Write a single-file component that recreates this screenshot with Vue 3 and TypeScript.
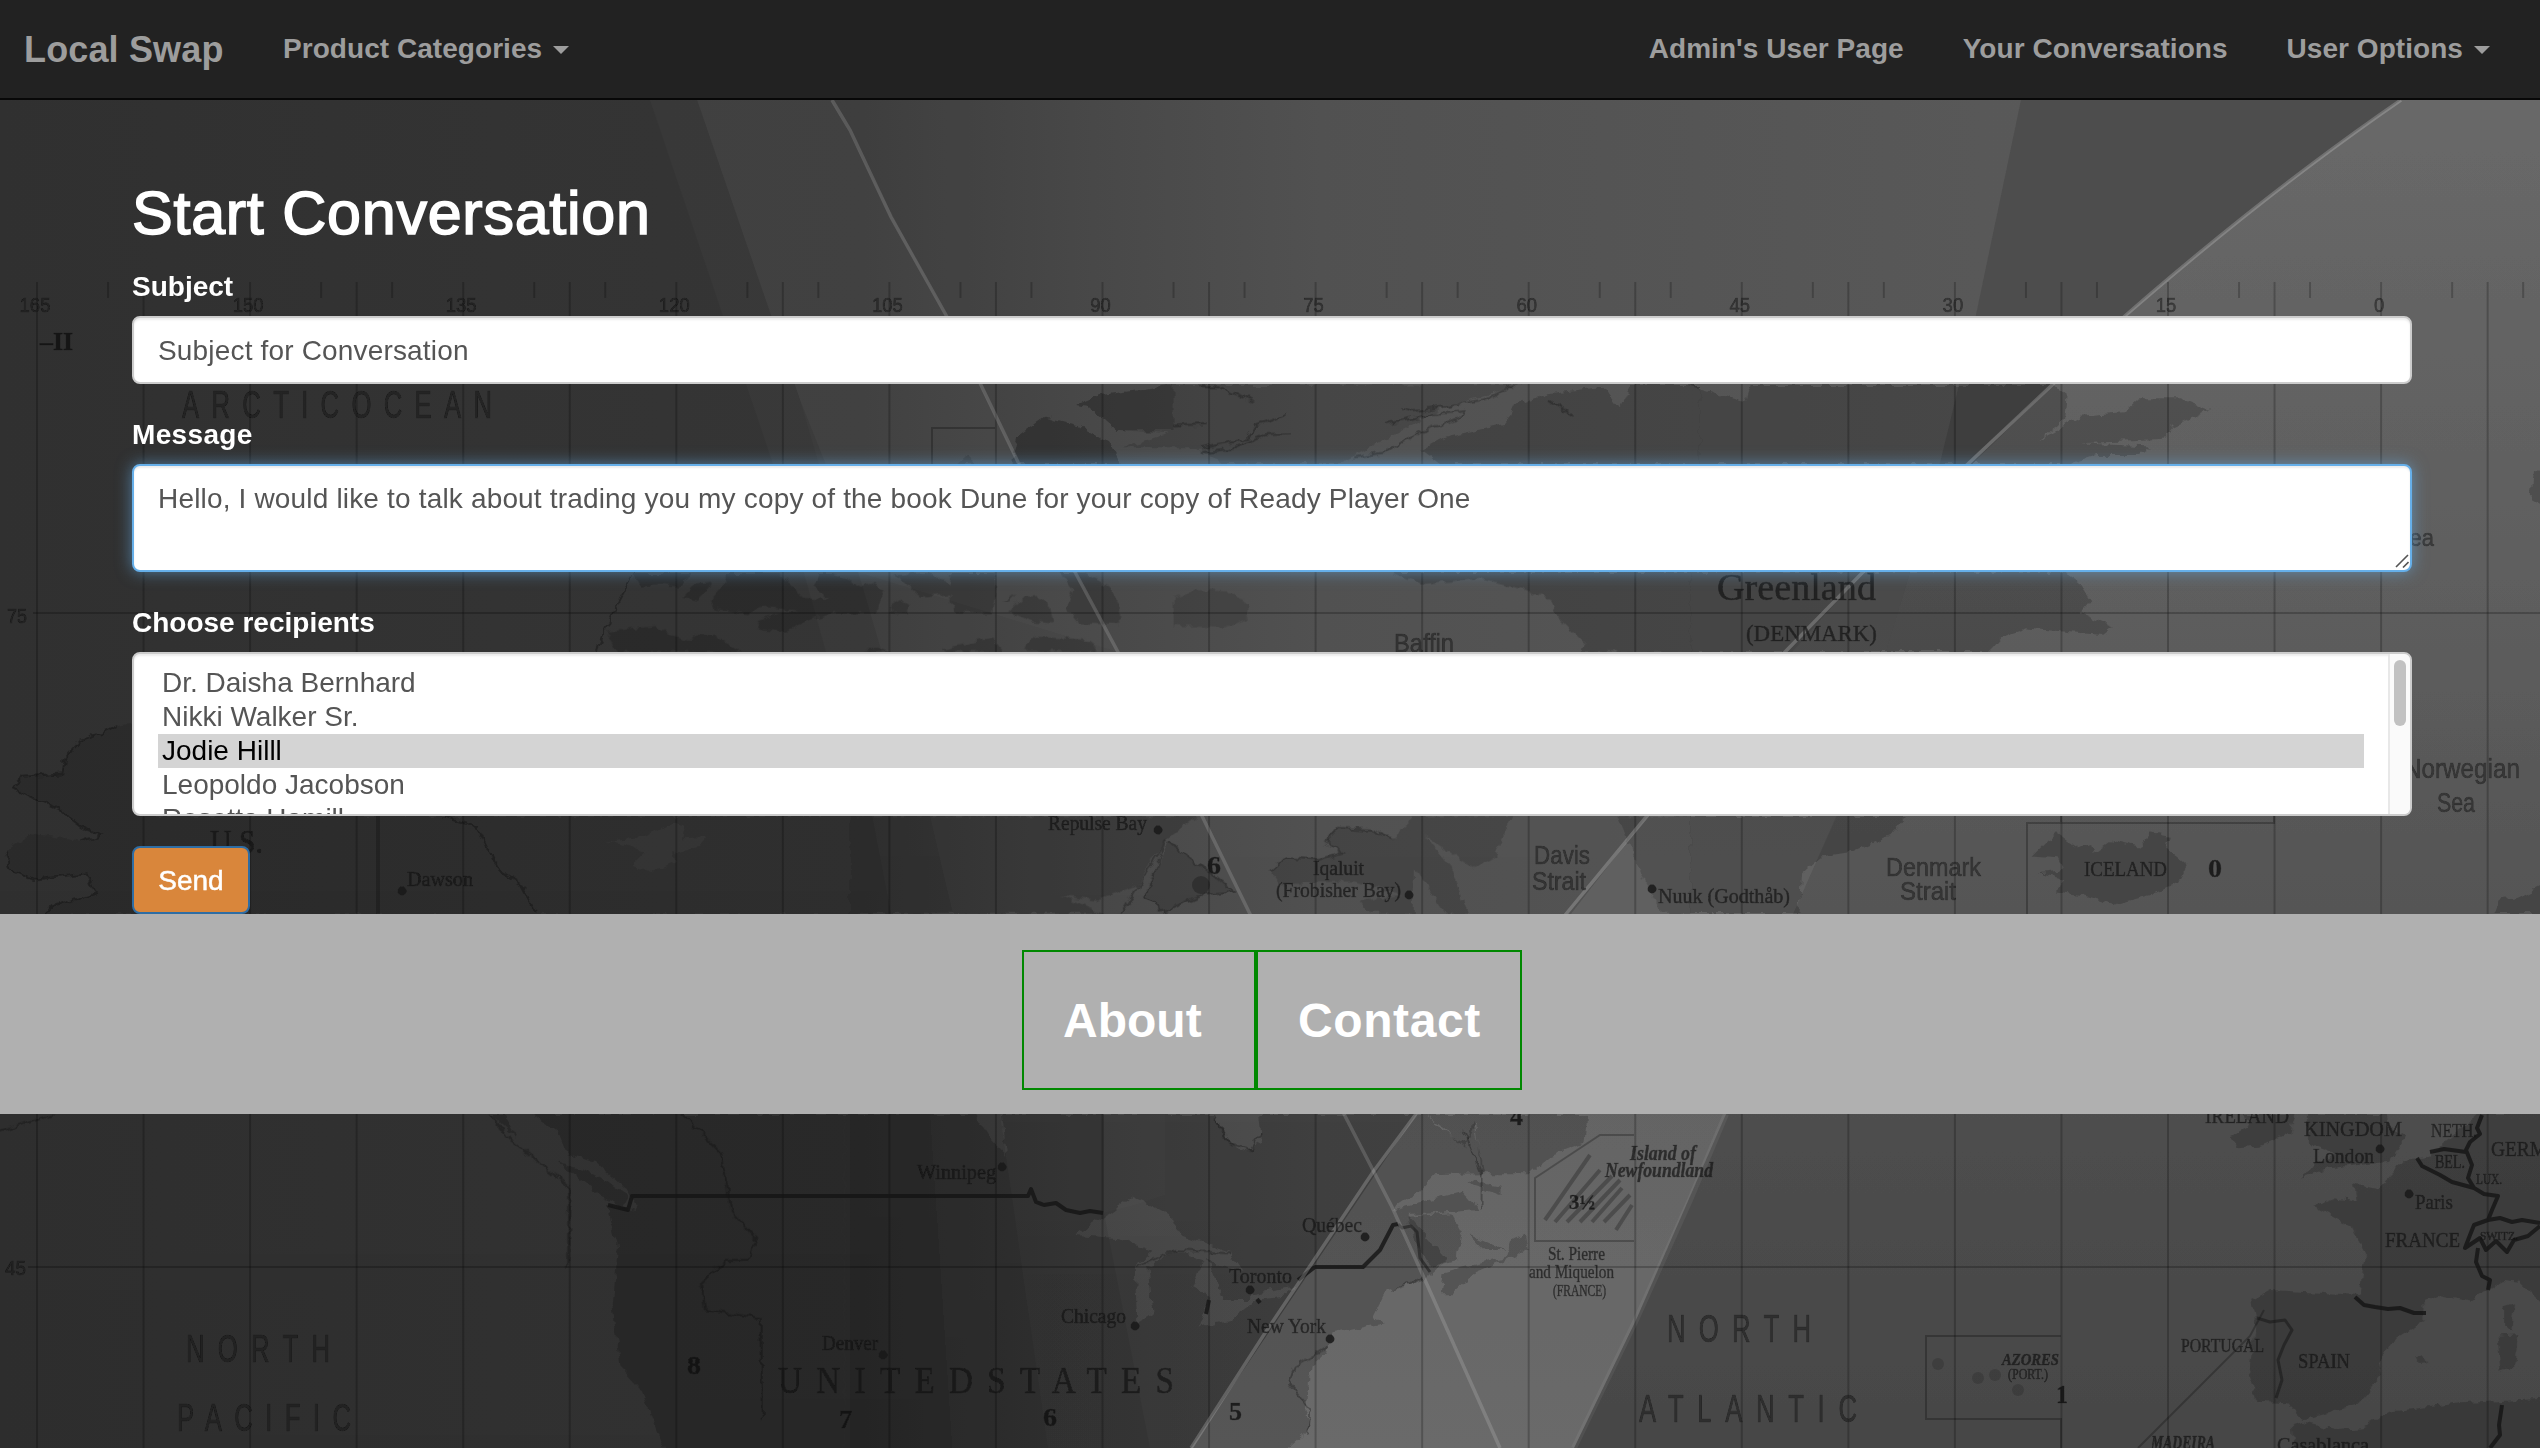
<script setup lang="ts">
import { ref } from 'vue'

interface MapLabel {
  t: string
  x: number
  y: number
  w: number
  s: number
  k?: 'sans' | 'serif' | 'bold' | 'italic'
}

const subject = ref('Subject for Conversation')
const message = ref(
  'Hello, I would like to talk about trading you my copy of the book Dune for your copy of Ready Player One',
)
const recipients = ['Dr. Daisha Bernhard', 'Nikki Walker Sr.', 'Jodie Hilll', 'Leopoldo Jacobson', 'Rosetta Hamill']
const selected = ref('Jodie Hilll')

const meridians = Array.from({ length: 24 }, (_, k) => 37 + k * 106.55)
const ticks = meridians.filter((_, k) => k % 2 === 1).flatMap((x) => [x - 35.5, x + 35.5])
const degrees = [165, 150, 135, 120, 105, 90, 75, 60, 45, 30, 15, 0]

const labels: MapLabel[] = [
  ...degrees.map((d, i) => {
    const w = String(d).length * 10.3
    return { t: String(d), x: 35 + i * 213.1 - w / 2, y: 312, w, s: 20, k: 'sans' as const }
  }),
  { t: '–II', x: 40, y: 350, w: 33, s: 26, k: 'bold' },
  { t: 'ARCTICOCEAN', x: 182, y: 418, w: 310, s: 39, k: 'sans' },
  { t: '75', x: 7, y: 623, w: 20, s: 20, k: 'sans' },
  { t: '45', x: 5, y: 1275, w: 21, s: 20, k: 'sans' },
  { t: 'U.S.', x: 210, y: 853, w: 53, s: 33 },
  { t: 'Dawson', x: 407, y: 886, w: 66, s: 20 },
  { t: 'Baffin', x: 1394, y: 652, w: 60, s: 25, k: 'sans' },
  { t: 'Repulse Bay', x: 1048, y: 830, w: 99, s: 20 },
  { t: '6', x: 1207, y: 874, w: 14, s: 26, k: 'bold' },
  { t: 'Iqaluit', x: 1313, y: 875, w: 51, s: 20 },
  { t: '(Frobisher Bay)', x: 1276, y: 897, w: 125, s: 20 },
  { t: 'Davis', x: 1534, y: 864, w: 56, s: 26, k: 'sans' },
  { t: 'Strait', x: 1532, y: 890, w: 54, s: 26, k: 'sans' },
  { t: 'Nuuk (Godthåb)', x: 1658, y: 903, w: 132, s: 20 },
  { t: 'Greenland', x: 1717, y: 600, w: 159, s: 38 },
  { t: '(DENMARK)', x: 1746, y: 641, w: 131, s: 24 },
  { t: 'Sea', x: 2395, y: 546, w: 39, s: 24, k: 'sans' },
  { t: 'Norwegian', x: 2404, y: 778, w: 116, s: 27, k: 'sans' },
  { t: 'Sea', x: 2437, y: 812, w: 38, s: 27, k: 'sans' },
  { t: 'Denmark', x: 1886, y: 876, w: 95, s: 26, k: 'sans' },
  { t: 'Strait', x: 1900, y: 900, w: 56, s: 26, k: 'sans' },
  { t: 'ICELAND', x: 2084, y: 876, w: 83, s: 21 },
  { t: '0', x: 2208, y: 877, w: 14, s: 26, k: 'bold' },
  { t: 'NORTH', x: 186, y: 1362, w: 144, s: 39, k: 'sans' },
  { t: 'PACIFIC', x: 177, y: 1431, w: 174, s: 39, k: 'sans' },
  { t: '8', x: 687, y: 1374, w: 14, s: 26, k: 'bold' },
  { t: 'Winnipeg', x: 917, y: 1179, w: 79, s: 22 },
  { t: 'Québec', x: 1302, y: 1232, w: 60, s: 21 },
  { t: 'Toronto', x: 1229, y: 1283, w: 63, s: 21 },
  { t: 'Chicago', x: 1061, y: 1323, w: 65, s: 21 },
  { t: 'New York', x: 1247, y: 1333, w: 79, s: 21 },
  { t: 'Denver', x: 822, y: 1350, w: 56, s: 21 },
  { t: 'UNITEDSTATES', x: 778, y: 1393, w: 396, s: 39 },
  { t: '7', x: 839, y: 1428, w: 13, s: 26, k: 'bold' },
  { t: '6', x: 1043, y: 1426, w: 14, s: 26, k: 'bold' },
  { t: '5', x: 1229, y: 1420, w: 13, s: 26, k: 'bold' },
  { t: '4', x: 1510, y: 1125, w: 13, s: 26, k: 'bold' },
  { t: '3½', x: 1569, y: 1209, w: 26, s: 20, k: 'bold' },
  { t: 'Island of', x: 1630, y: 1160, w: 66, s: 21, k: 'italic' },
  { t: 'Newfoundland', x: 1605, y: 1177, w: 108, s: 21, k: 'italic' },
  { t: 'St. Pierre', x: 1548, y: 1260, w: 57, s: 18 },
  { t: 'and Miquelon', x: 1529, y: 1278, w: 85, s: 18 },
  { t: '(FRANCE)', x: 1553, y: 1296, w: 53, s: 16 },
  { t: 'NORTH', x: 1667, y: 1342, w: 144, s: 39, k: 'sans' },
  { t: 'ATLANTIC', x: 1639, y: 1422, w: 218, s: 39, k: 'sans' },
  { t: 'IRELAND', x: 2205, y: 1123, w: 84, s: 21 },
  { t: 'KINGDOM', x: 2304, y: 1136, w: 98, s: 22 },
  { t: 'London', x: 2313, y: 1163, w: 61, s: 21 },
  { t: 'NETH.', x: 2431, y: 1137, w: 46, s: 19 },
  { t: 'GERM', x: 2491, y: 1156, w: 56, s: 22 },
  { t: 'BEL.', x: 2435, y: 1168, w: 30, s: 18 },
  { t: 'LUX.', x: 2476, y: 1184, w: 26, s: 14 },
  { t: 'Paris', x: 2415, y: 1209, w: 38, s: 21 },
  { t: 'FRANCE', x: 2385, y: 1247, w: 75, s: 22 },
  { t: 'SWITZ.', x: 2480, y: 1240, w: 38, s: 13 },
  { t: 'PORTUGAL', x: 2181, y: 1352, w: 83, s: 19 },
  { t: 'SPAIN', x: 2298, y: 1368, w: 52, s: 22 },
  { t: 'AZORES', x: 2002, y: 1365, w: 57, s: 16, k: 'italic' },
  { t: '(PORT.)', x: 2008, y: 1379, w: 40, s: 14 },
  { t: '1', x: 2056, y: 1403, w: 12, s: 26, k: 'bold' },
  { t: 'MADEIRA', x: 2151, y: 1449, w: 64, s: 18, k: 'italic' },
  { t: 'Casablanca', x: 2277, y: 1452, w: 92, s: 21 },
]

// Ocean and country names are set in condensed capitals with wide tracking.
const squeeze = (l: MapLabel) => (l.s === 39 ? (l.k === 'sans' ? 0.66 : 0.85) : 1)

const cities = [
  [402, 891], [1158, 830], [1409, 895], [1652, 889], [1002, 1167], [1365, 1237], [1250, 1290],
  [1135, 1326], [1330, 1339], [883, 1355], [2380, 1149], [2409, 1194],
]
</script>

<template>
  <div class="page">
    <svg class="map" viewBox="0 0 2540 1448" width="2540" height="1448" aria-hidden="true">
      <defs>
        <linearGradient id="sea" gradientUnits="userSpaceOnUse" x1="0" y1="0" x2="2540" y2="0">
          <stop offset="0" stop-color="#303030" />
          <stop offset="0.26" stop-color="#343434" />
          <stop offset="0.34" stop-color="#353535" />
          <stop offset="0.43" stop-color="#404040" />
          <stop offset="0.52" stop-color="#494949" />
          <stop offset="0.78" stop-color="#505050" />
          <stop offset="1" stop-color="#525252" />
        </linearGradient>
        <linearGradient id="east" gradientUnits="userSpaceOnUse" x1="0" y1="100" x2="0" y2="1448">
          <stop offset="0" stop-color="#686868" />
          <stop offset="0.3" stop-color="#606060" />
          <stop offset="0.6" stop-color="#555" />
          <stop offset="0.78" stop-color="#4d4d4d" />
          <stop offset="1" stop-color="#464646" />
        </linearGradient>
        <linearGradient id="dusk" gradientUnits="userSpaceOnUse" x1="0" y1="800" x2="0" y2="1448">
          <stop offset="0" stop-color="#000" stop-opacity="0" />
          <stop offset="1" stop-color="#000" stop-opacity="0.07" />
        </linearGradient>
        <linearGradient id="beam" gradientUnits="userSpaceOnUse" x1="0" y1="500" x2="0" y2="1448">
          <stop offset="0" stop-color="#5a5a5a" />
          <stop offset="1" stop-color="#6a6a6a" />
        </linearGradient>
        <filter id="coast" x="0" y="0" width="2540" height="1448" filterUnits="userSpaceOnUse">
          <feTurbulence type="fractalNoise" baseFrequency="0.11" numOctaves="2" seed="4" />
          <feDisplacementMap in="SourceGraphic" scale="9" xChannelSelector="R" yChannelSelector="G" />
          <feGaussianBlur stdDeviation="0.6" />
        </filter>
        <filter id="ink" x="0" y="0" width="2540" height="1448" filterUnits="userSpaceOnUse">
          <feGaussianBlur stdDeviation="0.7" />
        </filter>
      </defs>

      <!-- water and light -->
      <rect width="2540" height="1448" fill="url(#sea)" />
      <g filter="url(#ink)">
        <path d="M650 100 775 470 872 816 930 1114 952 1448H2540V100Z" fill="#fff" fill-opacity=".018" />
        <path d="M697 100 800 400 828 470 930 816 1000 1114 1048 1448H2540V100Z" fill="#fff" fill-opacity=".028" />
        <path d="M697 100 800 400 850 570 1118 652 1018 462 946 315 832 100Z" fill="#fff" fill-opacity=".02" />
        <rect y="800" width="1700" height="648" fill="url(#dusk)" />
        <path d="M2021 100 1976 315 1940 463 1925 500 2052 385 2167 283 2401 100Z" fill="#4d4d4d" />
        <path d="M2401 100Q2270 190 2126 315L1925 510 1910 572 1836 817 1793 914 1726 1114 1574 1448H2540V100Z" fill="url(#east)" />
        <path d="M1930 495 1863 572 1647 816 1416 1114 1191 1448H1574L1636 1320 1726 1114 1793 914 1836 817 1910 572Z" fill="url(#beam)" />
      </g>

      <!-- land -->
      <g class="land" filter="url(#coast)">
        <g transform="translate(0 440) scale(.5421 .3333)">
          <path fill-opacity=".11" d="M250 850 215 858 185 880 150 900 120 955 115 1000 40 1010 25 1045 60 1075 110 1110 150 1160 185 1185 150 1205 60 1180 10 1230 20 1290 60 1320 160 1300 175 1360 100 1395 80 1425H1568V1128H250Z M1115 1205 1180 1195 1240 1150 1265 1160 1260 1195 1305 1190 1290 1220 1240 1240 1245 1265 1205 1295 1165 1275 1190 1235 1150 1210Z" fill-rule="evenodd" />
        </g>
        <g transform="translate(600 570) scale(.3333)">
          <path d="M20 185 170 168 210 195 270 210 290 190 340 195 420 246H55ZM250 80 290 40 335 35 320 60 290 90ZM330 95 350 65 380 40 370 8H530L570 40 605 80 690 88 640 50 660 8H700L780 50 810 38 850 60 830 130 700 130 630 150 560 182 480 175 470 150 540 130 600 122 490 110 440 130 340 115ZM100 8H280L240 50 180 45 120 50Z" />
          <path d="M870 110 900 90 925 105 920 130 875 128ZM890 15 980 8 1050 40 1090 70 960 80ZM1050 8H1185V80L1175 130 1065 128 1055 95ZM1225 125 1270 80 1310 78 1350 105 1360 160 1300 155ZM1380 8H1450L1530 50 1560 110V165L1440 160 1400 110 1420 60ZM1030 235 1180 205 1210 246H1040ZM1275 225 1310 200 1470 210 1490 246H1270ZM790 246 830 233 880 246ZM1210 95 1250 75 1230 95ZM1180 170 1195 160ZM1255 165 1280 168Z" />
        </g>
        <g transform="translate(850 0) scale(.5421 .3333)">
          <path d="M415 1215 460 1185 535 1170 590 1155 H760L1240 1152 1100 1220 960 1340 900 1392H690L640 1345 500 1345 590 1300 490 1290 440 1220ZM300 1375 310 1310 360 1250 420 1275 480 1330 500 1392H300ZM200 1392 215 1370 235 1392Z" fill-rule="evenodd" fill-opacity=".13" />
          <path d="M415 1215 460 1185 535 1170 597 1150V1290L490 1290 440 1220ZM300 1375 310 1310 360 1250 420 1275 480 1330 500 1392H300Z" fill-opacity=".15" />
          <path d="M1055 1350 1100 1310 1210 1270 1225 1215 1290 1180 1390 1160 1420 1225 1440 1155H1568V1392H1090Z" />
        </g>
        <g transform="translate(1690 0) scale(.5421 .3333)">
          <path d="M-2 1155 100 1205 110 1155H670L695 1190 690 1260 640 1325 720 1250 800 1240 830 1195 905 1195 960 1230 890 1280 870 1320 720 1330 850 1340 830 1365 750 1365 700 1392H18V1155Z" />
        </g>
        <g transform="translate(850 560) scale(.5421 .3571)">
          <path d="M597 105 640 85 700 88 735 120 735 160 690 190 597 185Z" fill-opacity=".13" />
          <path d="M1000 35 1060 70 1160 50 1240 80 1290 110 1310 170 1355 235 1350 258H1550V35Z" />
          <path d="M0 717H640L585 780 560 830 530 910 455 955 390 940 470 991H0Z" />
          <path d="M590 790 640 850 710 930 650 940 580 985 545 945 560 880ZM775 870 800 835 860 840 910 820 875 790 900 750 960 755 1000 780 1040 720V991H960L940 955 1020 940 930 900 790 905ZM1040 717H1220L1190 830 1150 865 1090 800 1060 770 1110 860 1140 991H1100L1040 860ZM1415 717H1550V991H1500L1450 850Z" fill-opacity=".15" />
        </g>
        <g transform="translate(1690 440) scale(.5421 .3333)">
          <path d="M0 395H690L720 430 740 480 720 520 780 560 760 585 690 575 620 565 575 590 550 636H0Z" />
          <path d="M0 1128H400L370 1185 300 1235 240 1250 205 1300 200 1420H0Z" />
          <path d="M632 1250 675 1180 715 1225 740 1215 745 1240 780 1200 830 1220 850 1180 885 1190 880 1225 918 1275 900 1330 850 1365 780 1395 720 1365 675 1355 690 1320 645 1300 690 1290 680 1255ZM1480 1420 1490 1380 1530 1370 1590 1320V1420ZM1555 90 1590 95V215L1550 180Z" />
        </g>
        <g transform="translate(0 1100) scale(.5421 .3333)">
          <path d="M980 42 1030 100 1045 160 1100 190 1160 275 1175 330 1120 315 1140 440 1130 620 1145 800 1180 860 1200 940 1230 1070H1558V42ZM1030 185 1110 230 1160 290 1150 320 1110 290ZM905 42H930L955 115Z" />
        </g>
        <g transform="translate(850 1100) scale(.5421 .3333)">
          <path d="M-10 42H230L260 120 290 170 280 42H670L690 100 720 160 760 130 755 42H1060L1090 90 1135 130 1150 60 1170 220 1080 222 1050 275 1000 330 1130 275 1160 330 1030 345 1100 480 1060 540 990 570 965 650 985 670 890 700 880 760 850 800 840 930 850 980 790 1070H-10ZM415 405 480 340 520 290 590 345 605 400 700 455 725 515 680 500 660 470 690 600 750 600 700 660 645 680 665 590 630 560 650 480 600 450 550 500 560 640 530 670 525 500 560 455 500 415ZM740 580 820 560 800 590 740 600Z" fill-rule="evenodd" />
          <path d="M1060 42H1360L1355 130 1290 170 1255 220H1165L1155 70 1135 140ZM1030 350 1110 340 1130 400 1120 480 1070 500 1040 420ZM1090 580 1095 520 1210 470 1220 420 1245 400 1250 450 1150 520 1110 580ZM1135 240 1200 260 1200 285 1150 260ZM1140 400 1210 450 1170 450Z" />
        </g>
        <g transform="translate(1690 1100) scale(.5421 .3333)">
          <path d="M1000 105 1030 80 1020 42H1115L1105 100 1050 140 1010 145ZM1140 130 1140 42H1285L1290 80 1320 110 1290 185 1180 205 1130 230 1150 190 1190 160ZM1455 42H1590V640L1530 545 1500 540 1440 605 1380 585 1355 600 1355 660 1300 715 1270 790 1275 830 1230 915 1130 960 1100 910 1045 905 1030 820 1045 680 1035 600 1070 570 1235 585 1245 460 1220 380 1150 320 1190 295 1230 305 1225 250 1270 265 1320 180 1360 170ZM1500 620 1520 610 1515 690 1500 680ZM1490 710 1528 705 1520 800 1495 815ZM1115 1070 1110 975 1130 965 1190 990 1240 985 1290 935 1420 910 1590 895V1070ZM1340 775 1355 765 1360 790 1345 792Z" />
        </g>
      </g>

      <path d="M1104 914V1213L1150 1448H850V914Z" fill="#000" fill-opacity=".07" />
      <path d="M1104 1114V1213L1135 1205 1165 1195V1114Z" fill="#fff" fill-opacity=".012" />

      <!-- coast outlines and minor boundaries -->
      <g class="outline" filter="url(#coast)">
        <path transform="translate(0 440) scale(.5421 .3333)" d="M1170 396 1130 520 1100 636M820 1130 880 1160 920 1290 960 1330 990 1420M215 858 185 880 150 900 120 955 115 1000 40 1010 25 1045 60 1075 110 1110 150 1160 185 1185 150 1205M10 1230 20 1290 60 1320 160 1300 175 1360 100 1395 80 1425" />
        <path transform="translate(1120 384) scale(.3333)" d="M235 10 300 10 400 50M160 125 260 120M245 205 330 195 440 150 510 148M240 190 380 165 410 125 500 92M795 120 940 90 1030 82 1020 100 900 145 800 205 700 220M850 72 880 82 990 65 1100 45 1180 5M1290 50 1360 95" />
        <path transform="translate(850 1100) scale(.5421 .3333)" d="M670 50 700 130 740 150 760 100M530 500 600 450 700 460M885 740 820 800 810 850 850 930 845 1000M1130 90 1165 220 1165 330M1000 570 1060 530" />
        <path transform="translate(0 1100) scale(.5421 .3333)" d="M1260 42 1330 160 1350 340 1395 420 1380 480 1340 480 1295 550 1300 630 1405 655 1405 960M0 95 100 42M905 42 940 120 1050 260V500" />
        <path transform="translate(850 560) scale(.5421 .3571)" d="M590 790 640 850 710 930 650 940 580 985 545 945 560 880 585 780 500 991M775 870 800 835 860 840 910 820 875 790 900 750 960 755 1000 780" />
      </g>

      <!-- insets -->
      <g class="fine">
        <path d="M1634 1135H1600L1535 1178V1241H1634M2061 816V823H2027V914M2027 823H2274V816M2061 1336H1926V1419H2061V1448M2264 1310 2250 1336 2138 1448M995 428H932V464" />
        <path d="M1545 1220 1590 1155M1555 1222 1600 1170M1567 1222 1612 1176M1580 1222 1620 1180M1592 1222 1622 1188M1604 1222 1630 1195M1616 1230 1632 1205" stroke-width="4" />
      </g>

      <!-- graticule -->
      <g class="grid">
        <line v-for="(x, k) in meridians" :key="k" :x1="x" :x2="x" :y1="282" :y2="1448" />
        <line v-for="(x, k) in ticks" :key="'t' + k" :x1="x" :x2="x" y1="282" y2="298" />
        <path d="M33 613H2540M28 1267H2540" />
        <path d="M378 816V914" stroke-width="4" />
      </g>

      <!-- national borders -->
      <g class="border">
        <path d="M608 1205 628 1210 632 1196H1028L1031 1189 1036 1202 1044 1205 1056 1203 1066 1210 1080 1213 1090 1211 1103 1213M1209 1300 1206 1314M1257 1299 1260 1303M1298 1280 1315 1267H1363L1380 1250 1393 1225 1398 1224" />
        <path class="thin" d="M1398 1224 1402 1228 1411 1226 1417 1232 1420 1258 1430 1272M2257 1318 2270 1322 2285 1320 2292 1330 2284 1345 2278 1360 2282 1380 2276 1398" />
        <path d="M2355 1297 2364 1305 2375 1307 2388 1309 2400 1308 2414 1313 2426 1313M2482 1115 2477 1128 2480 1134 2470 1142 2466 1150 2472 1165 2468 1178 2474 1188 2484 1194 2498 1196 2492 1210 2488 1220 2474 1225 2470 1235 2465 1248 2480 1238 2486 1250 2496 1241 2507 1252 2514 1240 2528 1236 2540 1226M2488 1220 2500 1218 2512 1222 2522 1220 2540 1223M2478 1248 2476 1262 2482 1276 2490 1280 2488 1290M2417 1158 2422 1166 2440 1175 2452 1182 2474 1188M2430 1152 2444 1149 2466 1152M2502 1405 2499 1425 2500 1435 2490 1448" />
      </g>

      <!-- light streaks -->
      <g class="streak">
        <path d="M832 100 850 130 891 217 946 315 980 383 1018 462 1075 572 1118 652 1202 816 1250 914 1344 1114 1392 1207 1425 1280 1500 1448" stroke-opacity=".15" />
        <path d="M2401 100Q2270 190 2126 315L2052 385 1969 463 1863 572 1785 652 1647 816 1566 914 1416 1114 1373 1172 1316 1257 1265 1333 1191 1448" />
      </g>
      <path d="M1726 1114 1690 1200 1636 1320 1574 1448" fill="none" stroke="#fff" stroke-opacity=".06" stroke-width="6" filter="url(#ink)" />

      <g filter="url(#ink)">
        <circle v-for="(c, i) in cities" :key="i" :cx="c[0]" :cy="c[1]" r="4.4" fill="#161616" fill-opacity=".85" />
        <circle cx="1201" cy="885" r="9" fill="#000" fill-opacity=".25" />
        <g fill="#000" fill-opacity=".15">
          <circle cx="1938" cy="1364" r="6" />
          <circle cx="1978" cy="1378" r="6" />
          <circle cx="1995" cy="1375" r="6" />
          <circle cx="2018" cy="1390" r="6" />
        </g>
        <text
          v-for="(l, i) in labels"
          :key="i"
          :transform="`translate(${l.x} ${l.y}) scale(${squeeze(l)} 1)`"
          :font-size="l.s"
          :textLength="l.w / squeeze(l)"
          :lengthAdjust="l.s === 39 ? 'spacing' : 'spacingAndGlyphs'"
          :class="['place', l.k ?? 'serif']"
        >{{ l.t }}</text>
      </g>
    </svg>

    <nav class="navbar">
      <a class="brand">Local Swap</a>
      <a class="link categories">Product Categories<i class="caret"></i></a>
      <span class="spring"></span>
      <a class="link admin">Admin's User Page</a>
      <a class="link talks">Your Conversations</a>
      <a class="link options">User Options<i class="caret"></i></a>
    </nav>

    <main class="container">
      <h2>Start Conversation</h2>
      <div class="group">
        <label>Subject</label>
        <input v-model="subject" class="control subject" type="text" />
      </div>
      <div class="group">
        <label class="l-message">Message</label>
        <div class="area">
          <textarea v-model="message" class="control message" spellcheck="false"></textarea>
          <svg class="grip" width="14" height="14" viewBox="0 0 14 14">
            <path d="M1 13 13 1M8 13.500 13.500 8" fill="none" stroke="#555" stroke-width="1.600" />
          </svg>
        </div>
      </div>
      <div class="group">
        <label>Choose recipients</label>
        <div class="control list">
          <ul>
            <li v-for="r in recipients" :key="r" :class="{ on: r === selected }" @click="selected = r">{{ r }}</li>
          </ul>
          <div class="track"><div class="thumb"></div></div>
        </div>
      </div>
      <button class="send">Send</button>
    </main>

    <footer class="footer">
      <a class="about">About</a>
      <a class="contact">Contact</a>
    </footer>
  </div>
</template>

<style>
body {
  margin: 0;
  background: #333;
}
</style>

<style scoped>
.page {
  position: relative;
  width: 2540px;
  height: 1448px;
  overflow: hidden;
  font: 28px/40px 'Liberation Sans', Arial, sans-serif;
}
.page * {
  box-sizing: border-box;
}
.map {
  position: absolute;
  inset: 0;
  display: block;
}
.land {
  fill: #000;
  fill-opacity: 0.19;
}
.outline {
  fill: none;
  stroke: #000;
  stroke-opacity: 0.28;
}
.outline path {
  stroke-width: 2;
  vector-effect: non-scaling-stroke;
}
.fine {
  fill: none;
  stroke: #000;
  stroke-opacity: 0.25;
  stroke-width: 2;
}
.grid {
  fill: none;
  stroke: #000;
  stroke-opacity: 0.22;
  stroke-width: 2;
}
.border {
  fill: none;
  stroke: #141414;
  stroke-opacity: 0.8;
  stroke-width: 4;
  stroke-linejoin: round;
}
.border .thin {
  stroke-width: 3;
  stroke-opacity: 0.5;
}
.streak {
  fill: none;
  stroke: #fff;
  stroke-opacity: 0.2;
  stroke-width: 3.5;
}
.place {
  fill: #111;
  fill-opacity: 0.68;
  font-family: 'Liberation Serif', serif;
  stroke: #111;
  stroke-opacity: 0.3;
  stroke-width: 0.6;
}
.place.sans {
  font-family: 'Liberation Sans Narrow', 'Liberation Sans', sans-serif;
  fill-opacity: 0.5;
}
.place.bold {
  font-weight: 700;
  fill-opacity: 0.8;
}
.place.italic {
  font-style: italic;
  font-weight: 700;
}

.navbar {
  position: relative;
  display: flex;
  height: 100px;
  padding: 0 50px 0 24px;
  background: #222;
  border-bottom: 2px solid #080808;
  color: #9d9d9d;
  font-weight: 700;
}
.brand {
  font-size: 36px;
  line-height: 99px;
  letter-spacing: 0.15px;
  width: 259px;
}
.link {
  display: flex;
  line-height: 97px;
  white-space: nowrap;
  letter-spacing: 0.05px;
}
.spring {
  flex: 1;
}
.admin {
  margin-right: 59px;
}
.talks {
  margin-right: 59px;
}
.caret {
  width: 0;
  height: 0;
  margin: 46px 0 0 11px;
  border: 8px solid transparent;
  border-top-color: #9d9d9d;
  border-bottom: 0;
}

.container {
  position: relative;
  padding: 80px 128px 0 132px;
  height: 814px;
  color: #fff;
}
h2 {
  margin: 0 0 20px;
  font-size: 61px;
  line-height: 66px;
  font-weight: 400;
  letter-spacing: 0.75px;
  -webkit-text-stroke: 1.6px #fff;
}
.group {
  margin-bottom: 30px;
}
label {
  display: block;
  height: 40px;
  margin-bottom: 10px;
  font-weight: 700;
  line-height: 42px;
}
.l-message {
  letter-spacing: 0.35px;
}
.control {
  display: block;
  width: 100%;
  margin: 0;
  border: 2px solid #ccc;
  border-radius: 8px;
  background: #fff;
  color: #555;
  font: 28px/40px 'Liberation Sans', Arial, sans-serif;
  box-shadow: inset 0 2px 2px rgba(0, 0, 0, 0.075);
  outline: 0;
}
.subject {
  height: 68px;
  padding: 13px 24px 11px;
  letter-spacing: 0.17px;
}
.message {
  height: 108px;
  padding: 13px 24px 11px;
  resize: none;
  overflow: hidden;
  letter-spacing: 0.17px;
  border-color: #66afe9;
  box-shadow: inset 0 2px 2px rgba(0, 0, 0, 0.075), 0 0 16px rgba(102, 175, 233, 0.6);
}
.area {
  position: relative;
}
.grip {
  position: absolute;
  right: 3px;
  bottom: 4px;
}
.list {
  display: flex;
  height: 164px;
  overflow: hidden;
}
ul {
  flex: 1;
  list-style: none;
  margin: 0;
  padding: 12px 24px 0;
}
li {
  height: 34px;
  padding: 0 4px;
  line-height: 33px;
  white-space: nowrap;
}
li.on {
  background: #d4d4d4;
  color: #000;
}
.track {
  width: 22px;
  padding: 6px 4px;
  background: #fafafa;
  border-left: 2px solid #e8e8e8;
}
.thumb {
  width: 12px;
  height: 66px;
  border-radius: 6px;
  background: #c1c1c1;
}
.send {
  display: block;
  width: 118px;
  height: 68px;
  margin: 0;
  padding: 1px 0 0;
  border: 2px solid #2e6da4;
  border-radius: 8px;
  background: #d9863b;
  color: #fff;
  font: 28px/40px 'Liberation Sans', Arial, sans-serif;
  -webkit-text-stroke: 0.5px #fff;
}

.footer {
  position: relative;
  display: flex;
  justify-content: center;
  height: 200px;
  padding: 36px 0 0 4px;
  background: #b0b0b0;
  color: #fff;
  font-size: 48px;
  font-weight: 700;
  line-height: 138px;
}
.footer a {
  height: 140px;
  border: 2px solid #008800;
  padding-left: 39px;
}
.about {
  width: 234px;
}
.footer .contact {
  width: 266px;
  padding-left: 40px;
  letter-spacing: 0.6px;
}
</style>
